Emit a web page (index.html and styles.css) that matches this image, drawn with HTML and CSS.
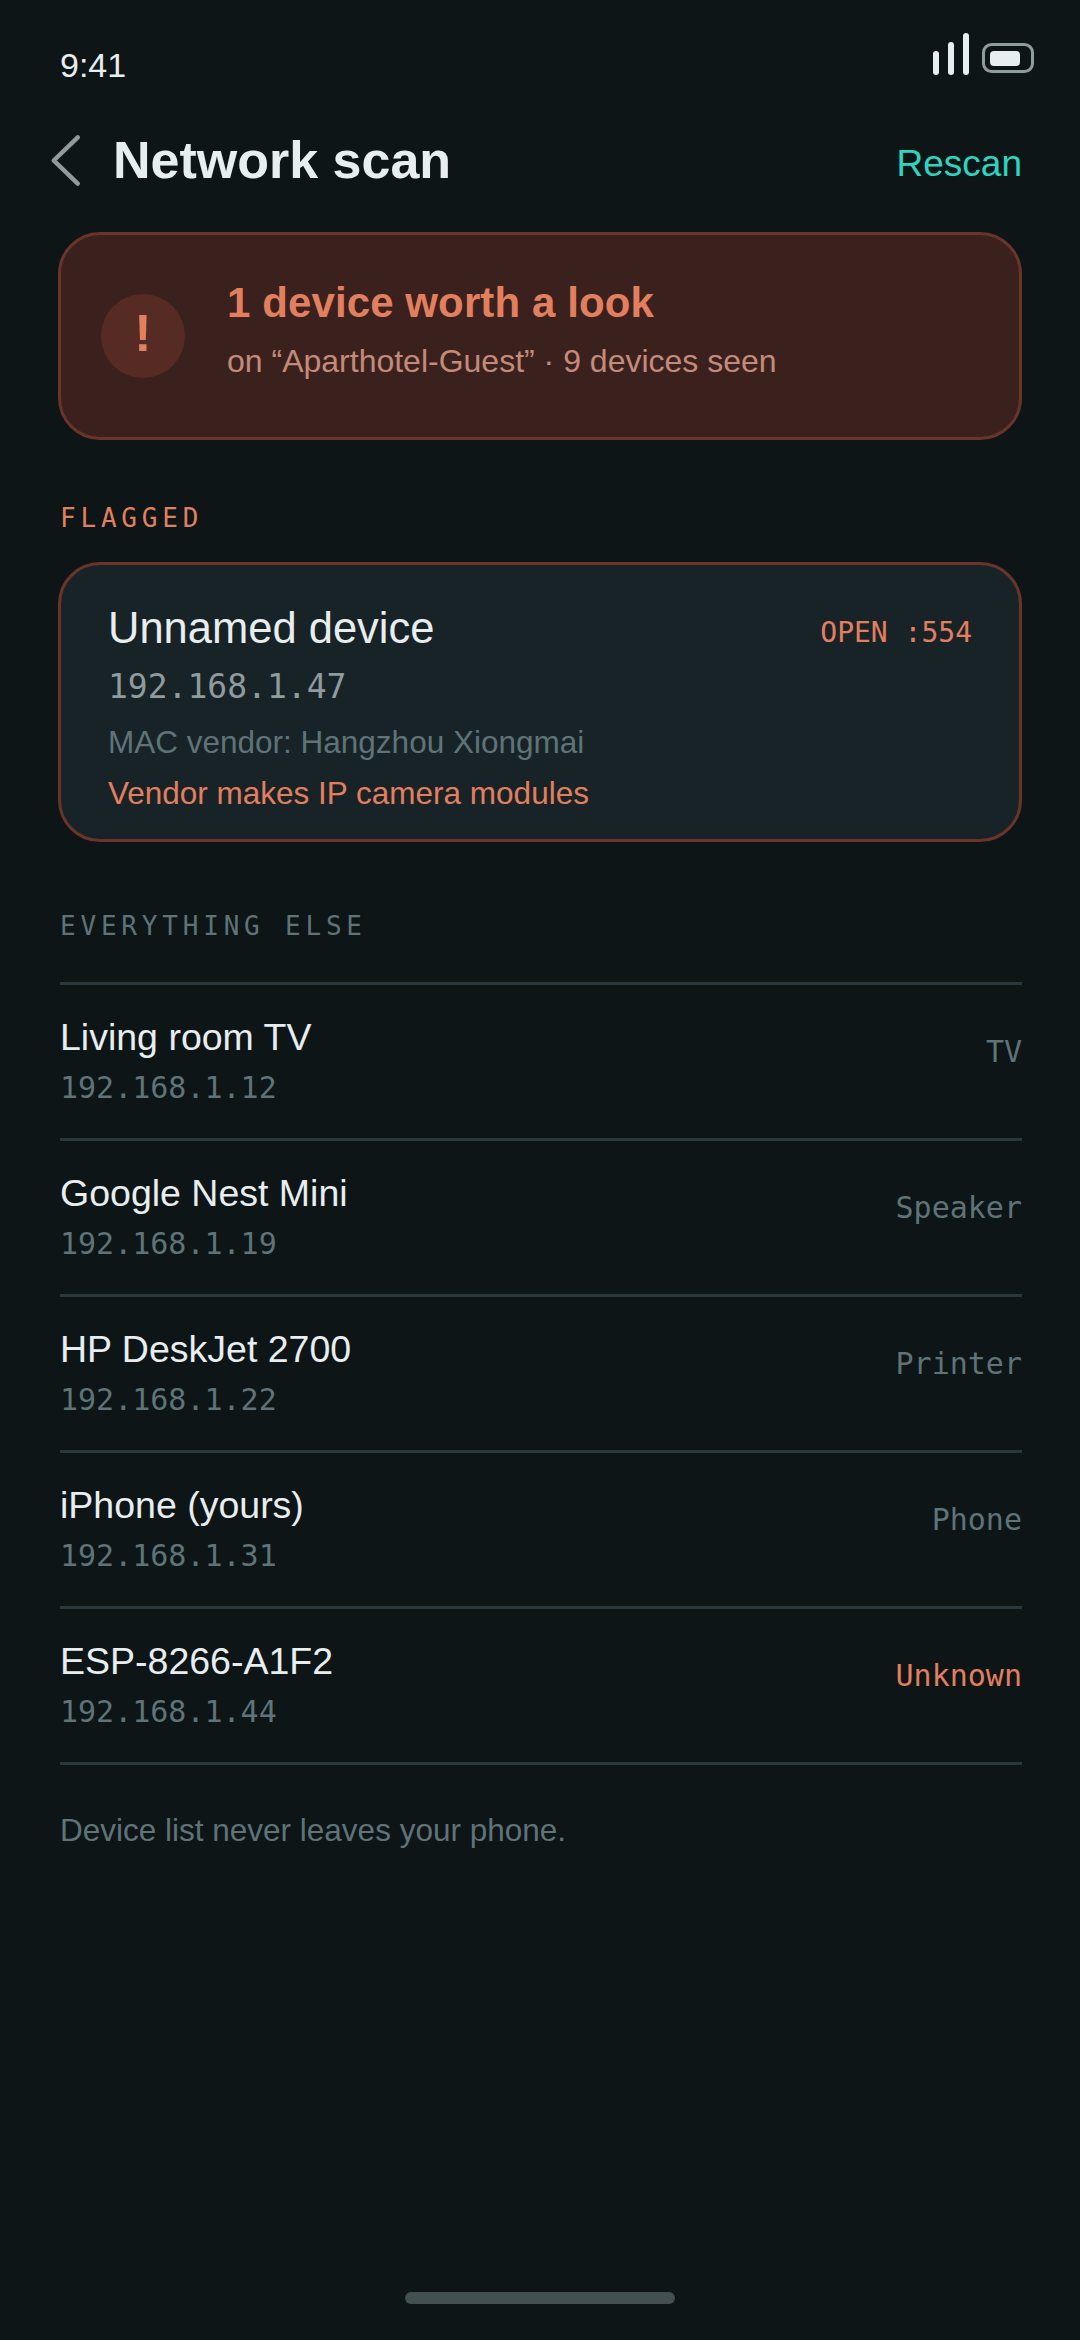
FILE: index.html
```html
<!DOCTYPE html>
<html lang="en">
<head>
    <meta charset="UTF-8">
    <meta name="viewport" content="width=device-width, initial-scale=1.0">
    <title>Network scan</title>
    <link rel="stylesheet" href="styles.css">
</head>
<body>
    <div class="screen">
        <!-- status bar -->
        <div class="status">
            <span class="time">9:41</span>
            <svg class="status-icons" width="102" height="44" viewBox="0 0 102 44">
                <rect x="0" y="18" width="6" height="24" rx="3" fill="#e8eeef"/>
                <rect x="15" y="9" width="6" height="33" rx="3" fill="#e8eeef"/>
                <rect x="30" y="0" width="6" height="42" rx="3" fill="#e8eeef"/>
                <rect x="50.5" y="11.5" width="49" height="27" rx="8" fill="none" stroke="#8f9b9d" stroke-width="3"/>
                <rect x="57" y="18" width="30" height="15" rx="4" fill="#e8eeef"/>
            </svg>
        </div>

        <!-- header -->
        <div class="header">
            <svg class="back" width="32" height="58" viewBox="0 0 32 58">
                <path d="M28.75 6.3 L4.75 29.5 L28.75 52.7" fill="none" stroke="#8f9b9d" stroke-width="4.5" stroke-linecap="round" stroke-linejoin="round"/>
            </svg>
            <h1 class="title">Network scan</h1>
            <a class="rescan">Rescan</a>
        </div>

        <!-- summary -->
        <div class="alert">
            <div class="alert-icon">!</div>
            <div class="alert-text">
                <div class="alert-title">1 device worth a look</div>
                <div class="alert-sub">on “Aparthotel-Guest” · 9 devices seen</div>
            </div>
        </div>

        <div class="label label-flagged">FLAGGED</div>
        <div class="flag-card">
            <div class="flag-top">
                <span class="flag-name">Unnamed device</span>
                <span class="flag-port">OPEN :554</span>
            </div>
            <div class="flag-ip">192.168.1.47</div>
            <div class="flag-vendor">MAC vendor: Hangzhou Xiongmai</div>
            <div class="flag-note">Vendor makes IP camera modules</div>
        </div>

        <div class="label label-else">EVERYTHING ELSE</div>
        <div class="list">
            <div class="row">
                <div><div class="row-name">Living room TV</div><div class="row-ip">192.168.1.12</div></div>
                <span class="row-type">TV</span>
            </div>
            <div class="row">
                <div><div class="row-name">Google Nest Mini</div><div class="row-ip">192.168.1.19</div></div>
                <span class="row-type">Speaker</span>
            </div>
            <div class="row">
                <div><div class="row-name">HP DeskJet 2700</div><div class="row-ip">192.168.1.22</div></div>
                <span class="row-type">Printer</span>
            </div>
            <div class="row">
                <div><div class="row-name">iPhone (yours)</div><div class="row-ip">192.168.1.31</div></div>
                <span class="row-type">Phone</span>
            </div>
            <div class="row">
                <div><div class="row-name">ESP-8266-A1F2</div><div class="row-ip">192.168.1.44</div></div>
                <span class="row-type row-type-warn">Unknown</span>
            </div>
        </div>
        <p class="foot">Device list never leaves your phone.</p>

        <div class="home"></div>
    </div>
</body>
</html>
```

FILE: styles.css
```css
*{
    margin: 0;
    padding: 0;
    box-sizing: border-box;
}
body{
    background-color: #0d1517;
    font-family: "Liberation Sans", Arial, sans-serif;
}
.screen{
    width: 1080px;
    height: 2340px;
    padding: 0 58px;
    display: flex;
    flex-direction: column;
    overflow: hidden;
}

/* status bar */
.status{
    height: 84px;
    display: flex;
    justify-content: space-between;
    align-items: flex-start;
    padding: 0 0 0 2px;
}
.time{
    margin-top: 47px;
    font-size: 34px;
    line-height: 36px;
    color: #e8eeef;
}
.status-icons{
    margin-top: 33px;
    margin-right: -13px;
}

/* header */
.header{
    height: 64px;
    margin-top: 44px;
    display: flex;
    align-items: center;
}
.back{
    margin-left: -9px;
}
.title{
    margin-left: 32px;
    font-size: 52px;
    font-weight: 700;
    color: #e8eeef;
}
.rescan{
    margin-left: auto;
    margin-top: 8px;
    font-size: 37px;
    color: #2dd4bf;
}

/* summary */
.alert{
    height: 208px;
    margin-top: 40px;
    padding: 0 40px;
    display: flex;
    align-items: center;
    gap: 42px;
    background-color: #3b211e;
    border: 3px solid #6b3428;
    border-radius: 42px;
}
.alert-icon{
    width: 84px;
    height: 84px;
    border-radius: 50%;
    background-color: #562b24;
    color: #e27f5f;
    font-size: 52px;
    font-weight: 700;
    line-height: 78px;
    text-align: center;
}
.alert-text{
    padding-bottom: 14px;
}
.alert-title{
    font-size: 42px;
    font-weight: 700;
    line-height: 48px;
    letter-spacing: 0.1px;
    color: #e27f5f;
}
.alert-sub{
    margin-top: 16px;
    font-size: 32px;
    line-height: 36px;
    color: #c48b7a;
}

/* section labels */
.label{
    font-family: "DejaVu Sans Mono", monospace;
    font-size: 26px;
    line-height: 32px;
    letter-spacing: 4.8px;
    padding-left: 2px;
}
.label-flagged{
    margin-top: 62px;
    color: #e27f5f;
}
.label-else{
    margin-top: 68px;
    color: #5f7378;
}

/* flagged card */
.flag-card{
    height: 280px;
    margin-top: 28px;
    padding: 39px 47px 0 47px;
    background-color: #182328;
    border: 3px solid #6b3428;
    border-radius: 42px;
}
.flag-top{
    display: flex;
    justify-content: space-between;
    align-items: center;
}
.flag-name{
    font-size: 43.5px;
    line-height: 48px;
    color: #e8eeef;
}
.flag-port{
    margin-top: 9px;
    font-family: "DejaVu Sans Mono", monospace;
    font-size: 28px;
    color: #e27f5f;
}
.flag-ip{
    margin-top: 16px;
    font-family: "DejaVu Sans Mono", monospace;
    font-size: 33px;
    line-height: 38px;
    color: #8f9b9d;
}
.flag-vendor{
    margin-top: 18px;
    font-size: 31.5px;
    line-height: 36px;
    color: #5f7378;
}
.flag-note{
    margin-top: 15px;
    font-size: 31.5px;
    line-height: 36px;
    color: #e27f5f;
}

/* device list */
.list{
    margin: 40px 0 0 2px;
    border-top: 3px solid #2a383e;
}
.row{
    height: 156px;
    padding-bottom: 2px;
    display: flex;
    justify-content: space-between;
    align-items: center;
    border-bottom: 3px solid #2a383e;
}
.row-name{
    font-size: 37.5px;
    line-height: 44px;
    color: #e8eeef;
}
.row-ip{
    margin-top: 11px;
    font-family: "DejaVu Sans Mono", monospace;
    font-size: 30px;
    line-height: 36px;
    color: #5f7378;
}
.row-type{
    margin-bottom: 18px;
    font-family: "DejaVu Sans Mono", monospace;
    font-size: 30px;
    color: #5f7378;
}
.row-type-warn{
    color: #e27f5f;
}
.foot{
    margin: 47px 0 0 2px;
    font-size: 31.5px;
    line-height: 36px;
    color: #5f7378;
}

.home{
    width: 270px;
    height: 12px;
    margin: auto auto 36px auto;
    border-radius: 6px;
    background-color: #425052;
}
```
